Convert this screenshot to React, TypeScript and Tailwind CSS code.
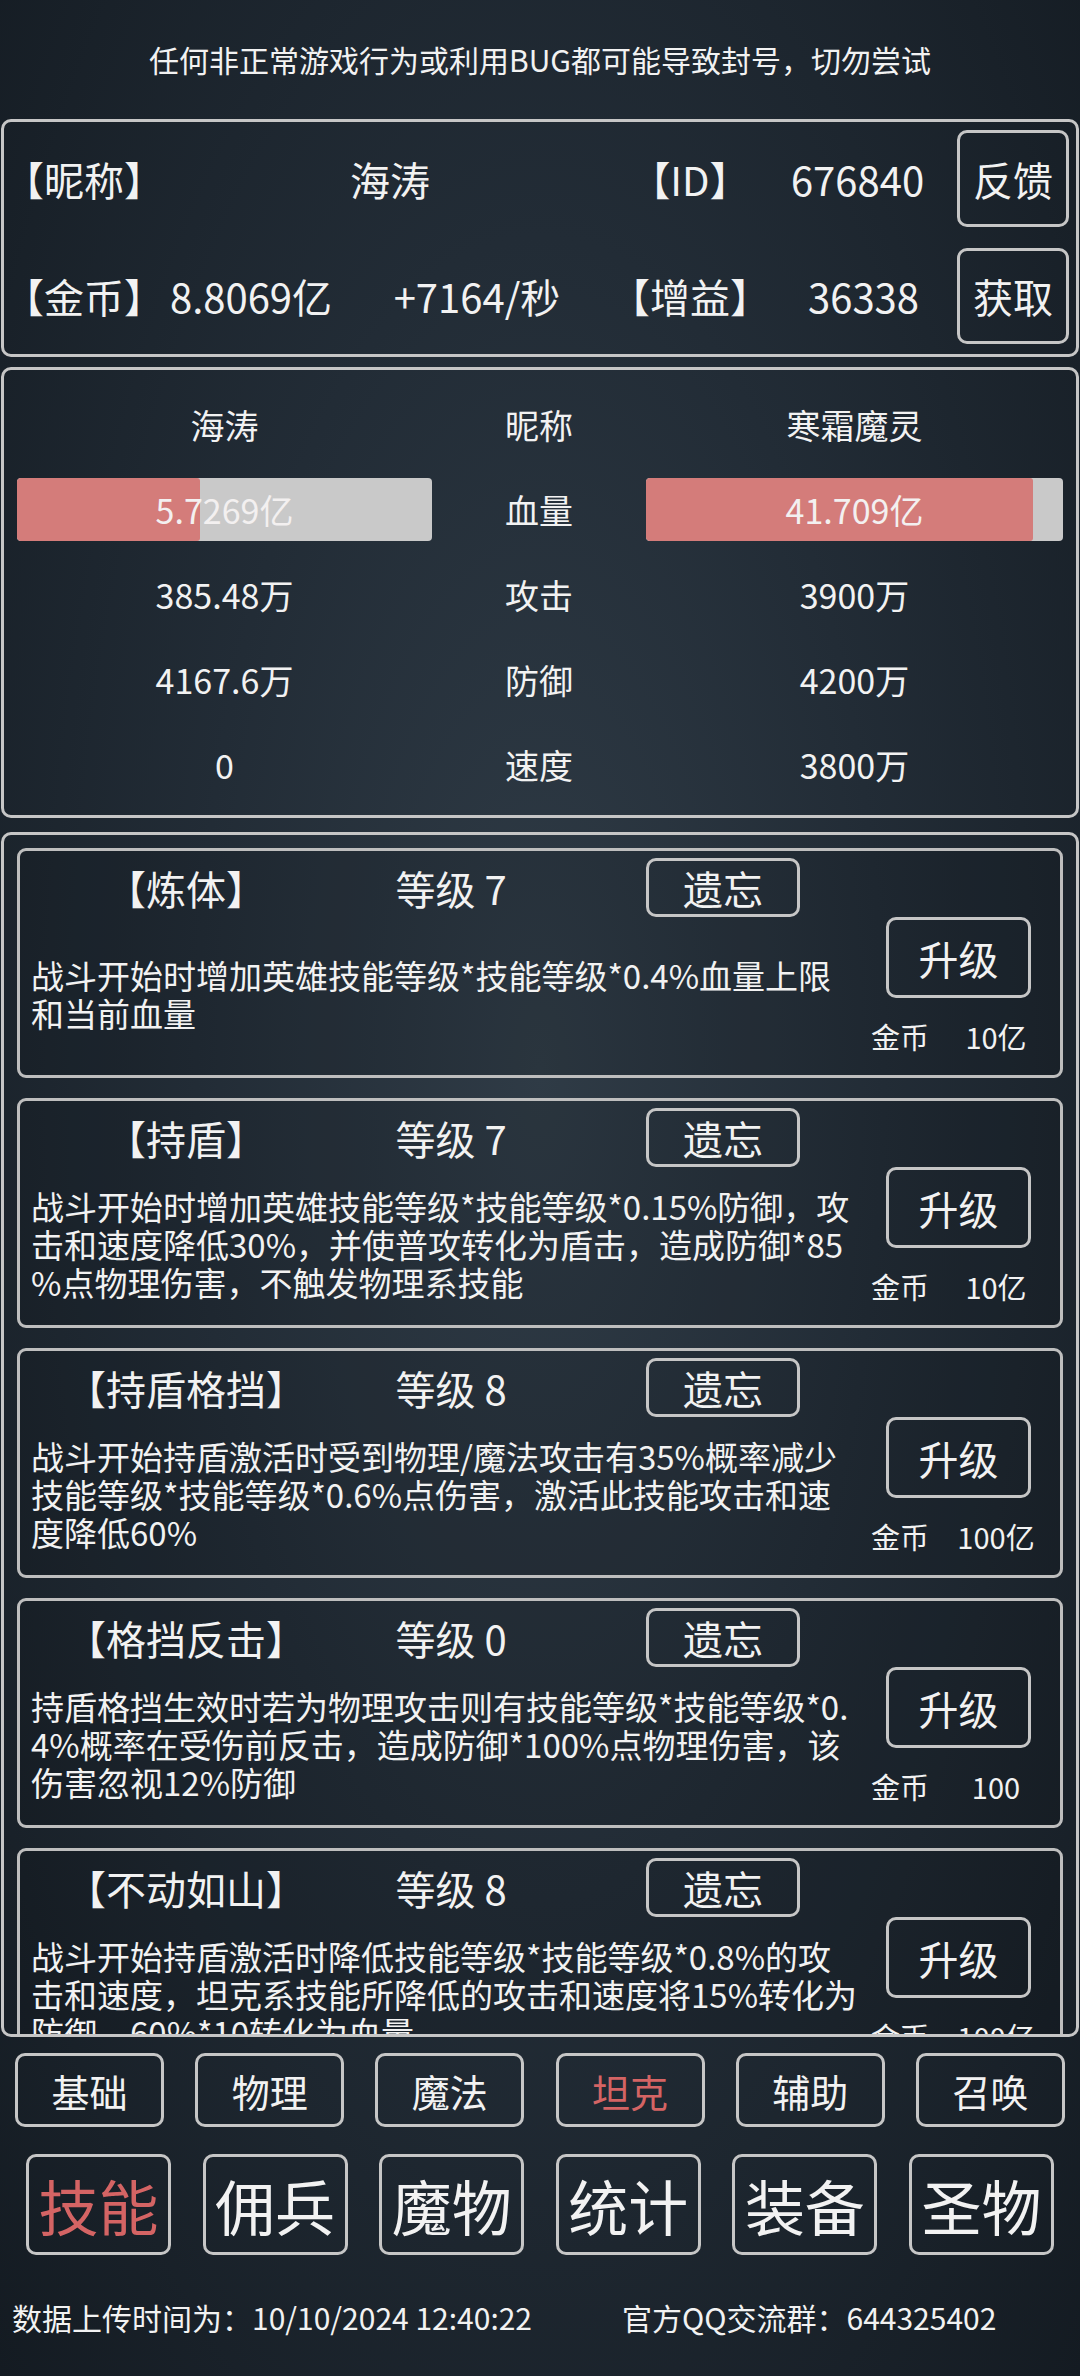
import React from "react";

const skills = [
  {
    name: "【炼体】",
    level: 7,
    cost: "10亿",
    lines: ["战斗开始时增加英雄技能等级*技能等级*0.4%血量上限", "和当前血量"],
  },
  {
    name: "【持盾】",
    level: 7,
    cost: "10亿",
    lines: [
      "战斗开始时增加英雄技能等级*技能等级*0.15%防御，攻",
      "击和速度降低30%，并使普攻转化为盾击，造成防御*85",
      "%点物理伤害，不触发物理系技能",
    ],
  },
  {
    name: "【持盾格挡】",
    level: 8,
    cost: "100亿",
    lines: [
      "战斗开始持盾激活时受到物理/魔法攻击有35%概率减少",
      "技能等级*技能等级*0.6%点伤害，激活此技能攻击和速",
      "度降低60%",
    ],
  },
  {
    name: "【格挡反击】",
    level: 0,
    cost: "100",
    lines: [
      "持盾格挡生效时若为物理攻击则有技能等级*技能等级*0.",
      "4%概率在受伤前反击，造成防御*100%点物理伤害，该",
      "伤害忽视12%防御",
    ],
  },
  {
    name: "【不动如山】",
    level: 8,
    cost: "100亿",
    lines: [
      "战斗开始持盾激活时降低技能等级*技能等级*0.8%的攻",
      "击和速度，坦克系技能所降低的攻击和速度将15%转化为",
      "防御，60%*10转化为血量",
    ],
  },
];

const stats = [
  { left: "385.48万", label: "攻击", right: "3900万" },
  { left: "4167.6万", label: "防御", right: "4200万" },
  { left: "0", label: "速度", right: "3800万" },
];

const tabs = ["基础", "物理", "魔法", "坦克", "辅助", "召唤"];
const menus = ["技能", "佣兵", "魔物", "统计", "装备", "圣物"];

const HeroName = "海涛";

const HpBar = ({ value, pct }: { value: string; pct: number }) => (
  <div className="relative h-[63px] w-full overflow-hidden rounded-[4px] bg-[#c9c9c9]">
    <div className="h-full rounded-[3px] bg-[#d47c7a]" style={{ width: `${pct}%` }} />
    <div className="absolute inset-0 flex items-center justify-center text-[34px] text-[#f3f0f0]">
      {value}
    </div>
  </div>
);

const App = () => {
  return (
    <div className="min-h-screen w-[1080px] bg-[radial-gradient(ellipse_at_50%_45%,#2f3b46_0%,#222c36_45%,#141b22_100%)] font-['Noto_Sans_CJK_SC','Noto_Sans',sans-serif] text-[#f2f2f2]">
      {/* warning */}
      <div className="flex h-[119px] items-center justify-center text-[30px]">
        任何非正常游戏行为或利用BUG都可能导致封号，切勿尝试
      </div>

      {/* player info */}
      <div className="mx-px flex h-[238px] flex-col gap-[21px] rounded-[10px] border-[3px] border-[#c6c6c6] pt-[8px] text-[40px]">
        <div className="flex h-[97px] items-center">
          <div className="w-[154px] text-center">【昵称】</div>
          <div className="w-[464px] text-center">{HeroName}</div>
          <div className="w-[136px] text-center">【ID】</div>
          <div className="w-[199px] text-center">676840</div>
          <button className="h-[97px] w-[112px] rounded-[10px] border-[3px] border-[#c6c6c6] text-[40px]">反馈</button>
        </div>
        <div className="flex h-[96px] items-center">
          <div className="w-[154px] text-center">【金币】</div>
          <div className="w-[186px] text-center">8.8069亿</div>
          <div className="w-[266px] text-center">+7164/秒</div>
          <div className="w-[160px] text-center">【增益】</div>
          <div className="w-[187px] text-center">36338</div>
          <button className="h-[96px] w-[112px] rounded-[10px] border-[3px] border-[#c6c6c6] text-[40px]">获取</button>
        </div>
      </div>

      {/* battle */}
      <div className="mx-px mt-[10px] h-[451px] rounded-[10px] border-[3px] border-[#c6c6c6] px-[13px] pt-[12px] text-[34px]">
        <div className="flex h-[85px] items-center">
          <div className="w-[415px] text-center">{HeroName}</div>
          <div className="w-[214px] text-center">昵称</div>
          <div className="flex-1 text-center">寒霜魔灵</div>
        </div>
        <div className="flex h-[85px] items-center">
          <div className="w-[415px]">
            <HpBar value="5.7269亿" pct={44.1} />
          </div>
          <div className="w-[214px] text-center">血量</div>
          <div className="flex-1">
            <HpBar value="41.709亿" pct={92.8} />
          </div>
        </div>
        {stats.map((s) => (
          <div key={s.label} className="flex h-[85px] items-center">
            <div className="w-[415px] text-center">{s.left}</div>
            <div className="w-[214px] text-center">{s.label}</div>
            <div className="flex-1 text-center">{s.right}</div>
          </div>
        ))}
      </div>

      {/* skills */}
      <div className="mx-px mt-[14px] h-[1205px] overflow-hidden rounded-[10px] border-[3px] border-[#c6c6c6] px-[13px] pt-[13px]">
        <div className="flex flex-col gap-[20px]">
          {skills.map((sk) => (
            <div
              key={sk.name}
              className="flex h-[230px] shrink-0 rounded-[9px] border-[3px] border-[#bebebe] bg-black/10"
            >
              <div className="flex flex-1 flex-col">
                <div className="flex h-[66px] items-end">
                  <div className="flex h-[59px] w-[332px] items-center justify-center text-[40px]">{sk.name}</div>
                  <div className="flex h-[59px] w-[198px] items-center justify-center text-[40px]">
                    等级 {sk.level}
                  </div>
                  <button className="ml-[96px] h-[59px] w-[154px] rounded-[10px] border-[3px] border-[#c6c6c6] text-[40px] leading-none">
                    遗忘
                  </button>
                </div>
                <div className="flex flex-1 flex-col justify-center pb-[4px] pl-[11px] text-[33px] leading-[38px]">
                  {sk.lines.map((l) => (
                    <div key={l} className="whitespace-nowrap">
                      {l}
                    </div>
                  ))}
                </div>
              </div>
              <div className="flex w-[192px] flex-col pt-[66px]">
                <button className="ml-[18px] h-[81px] w-[145px] rounded-[10px] border-[3px] border-[#c6c6c6] text-[40px]">
                  升级
                </button>
                <div className="mt-[20px] flex h-[38px] items-center text-[29px]">
                  <div className="w-[64px] text-center">金币</div>
                  <div className="w-[128px] text-center">{sk.cost}</div>
                </div>
              </div>
            </div>
          ))}
        </div>
      </div>

      {/* category tabs */}
      <div className="mt-[16px] flex justify-between px-[15px]">
        {tabs.map((t) => (
          <button
            key={t}
            className={`h-[74px] w-[149px] rounded-[10px] border-[3px] border-[#c6c6c6] text-[38px] ${
              t === "坦克" ? "text-[#d46464]" : "text-[#f2f2f2]"
            }`}
          >
            {t}
          </button>
        ))}
      </div>

      {/* main menu */}
      <div className="mt-[27px] flex justify-between px-[26px]">
        {menus.map((m) => (
          <button
            key={m}
            className={`h-[101px] w-[145px] rounded-[10px] border-[3px] border-[#c6c6c6] text-[60px] leading-none ${
              m === "技能" ? "text-[#d46464]" : "text-[#f2f2f2]"
            }`}
          >
            {m}
          </button>
        ))}
      </div>

      {/* footer */}
      <div className="mt-[42px] flex h-[40px] items-center text-[30px]">
        <div className="w-[610px] pl-[12px]">数据上传时间为：10/10/2024 12:40:22</div>
        <div className="pl-[12px]">官方QQ交流群：644325402</div>
      </div>
    </div>
  );
};

export default App;
